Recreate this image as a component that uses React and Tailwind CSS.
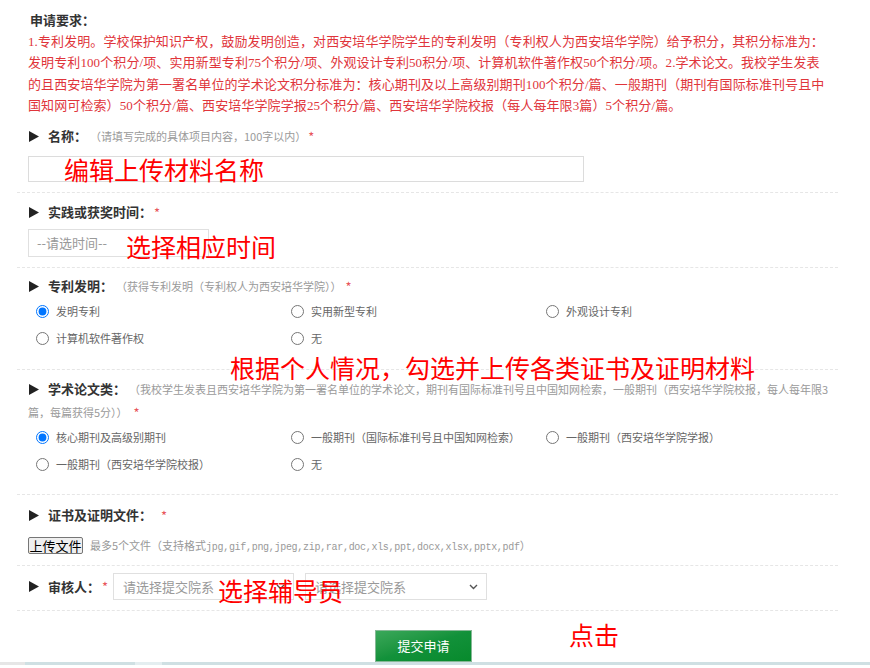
import React from 'react';

const Arrow = () => (
  <svg width="10" height="11" viewBox="0 0 10 11" className="ml-[1px] shrink-0">
    <path d="M0 0 L10 5.5 L0 11 Z" fill="#222" />
  </svg>
);

const Star = ({ className = '' }) => (
  <span className={`text-[13px] leading-none text-[#e8555a] ${className}`}>*</span>
);

const Label = ({ children }) => (
  <span className="ml-[9px] text-[13px] font-bold text-[#333] whitespace-nowrap">{children}</span>
);

const Hint = ({ children }) => (
  <span className="ml-[3px] text-[11px] text-[#9a9a9a] whitespace-nowrap">{children}</span>
);

const Radio = ({ name, label, checked }) => (
  <label className="flex h-[27px] items-center">
    <input type="radio" name={name} defaultChecked={checked} className="m-0 h-[13px] w-[13px] shrink-0" />
    <span className="ml-[7px] text-[11px] text-[#666] whitespace-nowrap">{label}</span>
  </label>
);

const Chevron = () => (
  <svg width="9" height="6" viewBox="0 0 9 6" className="shrink-0">
    <path d="M1 1 L4.5 4.5 L8 1" fill="none" stroke="#555" strokeWidth="1.4" />
  </svg>
);

const Select = ({ className = '' }) => (
  <div className={`flex h-[27px] items-center justify-between border border-[#e0e0e0] bg-white pl-[9px] pr-[8px] ${className}`}>
    <span className="text-[13px] text-[#999] whitespace-nowrap">请选择提交院系</span>
    <Chevron />
  </div>
);

const patentOptions = ['发明专利', '实用新型专利', '外观设计专利', '计算机软件著作权', '无'];
const paperOptions = [
  '核心期刊及高级别期刊',
  '一般期刊（国际标准刊号且中国知网检索）',
  '一般期刊（西安培华学院学报）',
  '一般期刊（西安培华学院校报）',
  '无',
];

const Note = ({ className, children }) => (
  <div className={`absolute text-[25px] leading-none text-[#ff0000] whitespace-nowrap ${className}`}>{children}</div>
);

export default function App() {
  return (
    <div className="relative h-[668px] w-[870px] overflow-hidden bg-white font-['Noto_Sans_CJK_SC',sans-serif]">
      <div className="pl-[28px] pt-[9px]">
        <div className="pl-[2px] text-[13px] font-bold leading-[21.5px] text-[#333]">申请要求：</div>
        <div className="text-[13px] leading-[21.5px] tracking-[0.1px] text-[#e0353b] font-['Liberation_Serif','Noto_Sans_CJK_SC',serif] whitespace-nowrap">
          <div>1.专利发明。学校保护知识产权，鼓励发明创造，对西安培华学院学生的专利发明（专利权人为西安培华学院）给予积分，其积分标准为：</div>
          <div>发明专利100个积分/项、实用新型专利75个积分/项、外观设计专利50积分/项、计算机软件著作权50个积分/项。2.学术论文。我校学生发表</div>
          <div>的且西安培华学院为第一署名单位的学术论文积分标准为：核心期刊及以上高级别期刊100个积分/篇、一般期刊（期刊有国际标准刊号且中</div>
          <div>国知网可检索）50个积分/篇、西安培华学院学报25个积分/篇、西安培华学院校报（每人每年限3篇）5个积分/篇。</div>
        </div>
      </div>

      <div className="ml-[17px] w-[821px]">
        <div className="border-b border-dashed border-[#e6e6e6] pb-[9.5px] pl-[11px] pt-[7.5px]">
          <div className="flex h-[24px] items-center">
            <Arrow />
            <Label>名称：</Label>
            <Hint>（请填写完成的具体项目内容，100字以内）</Hint>
            <Star className="ml-[2px]" />
          </div>
          <div className="mt-[8px] h-[26px] w-[556px] border border-[#dcdcdc] bg-white" />
        </div>

        <div className="border-b border-dashed border-[#e6e6e6] pb-[9.5px] pl-[11px] pt-[7.5px]">
          <div className="flex h-[24px] items-center">
            <Arrow />
            <Label>实践或获奖时间：</Label>
            <Star className="ml-[2px]" />
          </div>
          <div className="mt-[5px] flex h-[28px] w-[181px] items-center border border-[#e0e0e0] bg-white pl-[8px]">
            <span className="text-[13px] text-[#999]">--请选时间--</span>
          </div>
        </div>

        <div className="border-b border-dashed border-[#e6e6e6] pb-[17px] pl-[11px] pt-[6.5px]">
          <div className="flex h-[24px] items-center">
            <Arrow />
            <Label>专利发明：</Label>
            <Hint>（获得专利发明（专利权人为西安培华学院））</Hint>
            <Star className="ml-[4px]" />
          </div>
          <div className="grid grid-cols-[255px_255px_255px] pl-[8px]">
            {patentOptions.map((item, i) => (
              <Radio key={item} name="patent" label={item} checked={i === 0} />
            ))}
          </div>
        </div>

        <div className="border-b border-dashed border-[#e6e6e6] pb-[16.5px] pl-[11px] pt-[7.5px]">
          <div className="flex h-[23px] items-center">
            <Arrow />
            <Label>学术论文类：</Label>
            <Hint>（我校学生发表且西安培华学院为第一署名单位的学术论文，期刊有国际标准刊号且中国知网检索，一般期刊（西安培华学院校报，每人每年限3</Hint>
          </div>
          <div className="flex h-[23px] items-center">
            <span className="text-[11px] text-[#9a9a9a]">篇，每篇获得5分））</span>
            <Star className="ml-[6px]" />
          </div>
          <div className="grid grid-cols-[255px_255px_255px] pl-[8px]">
            {paperOptions.map((item, i) => (
              <Radio key={item} name="paper" label={item} checked={i === 0} />
            ))}
          </div>
        </div>

        <div className="border-b border-dashed border-[#e6e6e6] pb-[11px] pl-[11px] pt-[8px]">
          <div className="flex h-[24px] items-center">
            <Arrow />
            <Label>证书及证明文件：</Label>
            <Star className="ml-[9px]" />
          </div>
          <div className="mt-[10px] flex h-[17px] items-center">
            <button className="flex h-[17px] w-[55px] items-center justify-center rounded-[2px] border border-[#767676] bg-[#efefef] text-[13px] leading-none text-black">
              上传文件
            </button>
            <span className="ml-[7px] text-[11px] text-[#999] whitespace-nowrap">
              最多5个文件（支持格式
              <span className="font-['Liberation_Mono',monospace] text-[10px] tracking-[-0.3px]">jpg,gif,png,jpeg,zip,rar,doc,xls,ppt,docx,xlsx,pptx,pdf</span>
              ）
            </span>
          </div>
        </div>

        <div className="border-b border-dashed border-[#e6e6e6] pb-[10px] pl-[11px] pt-[7px]">
          <div className="flex h-[27px] items-center">
            <Arrow />
            <Label>审核人：</Label>
            <Star className="ml-[2px]" />
            <Select className="ml-[5px] w-[181px]" />
            <Select className="ml-[11px] w-[182px]" />
          </div>
        </div>

        <div className="pt-[19px]">
          <button className="ml-[358px] flex h-[32px] w-[97px] items-center justify-center border border-[#86b896] bg-gradient-to-br from-[#3aa85a] via-[#12913a] to-[#078a2c] text-[13px] text-white">
            提交申请
          </button>
        </div>
      </div>

      <div className="flex h-[3px]">
        <div className="w-[25px] bg-[#e6e6e6]" />
        <div className="w-[110px] bg-[#cfe0e3]" />
        <div className="w-[27px] bg-[#e4eef0]" />
        <div className="flex-1 bg-[#cfe0e3]" />
      </div>

      <Note className="left-[64px] top-[156.5px]">编辑上传材料名称</Note>
      <Note className="left-[126px] top-[234px]">选择相应时间</Note>
      <Note className="left-[230px] top-[354.5px]">根据个人情况，勾选并上传各类证书及证明材料</Note>
      <Note className="left-[218px] top-[577.5px]">选择辅导员</Note>
      <Note className="left-[569px] top-[622px]">点击</Note>
    </div>
  );
}
